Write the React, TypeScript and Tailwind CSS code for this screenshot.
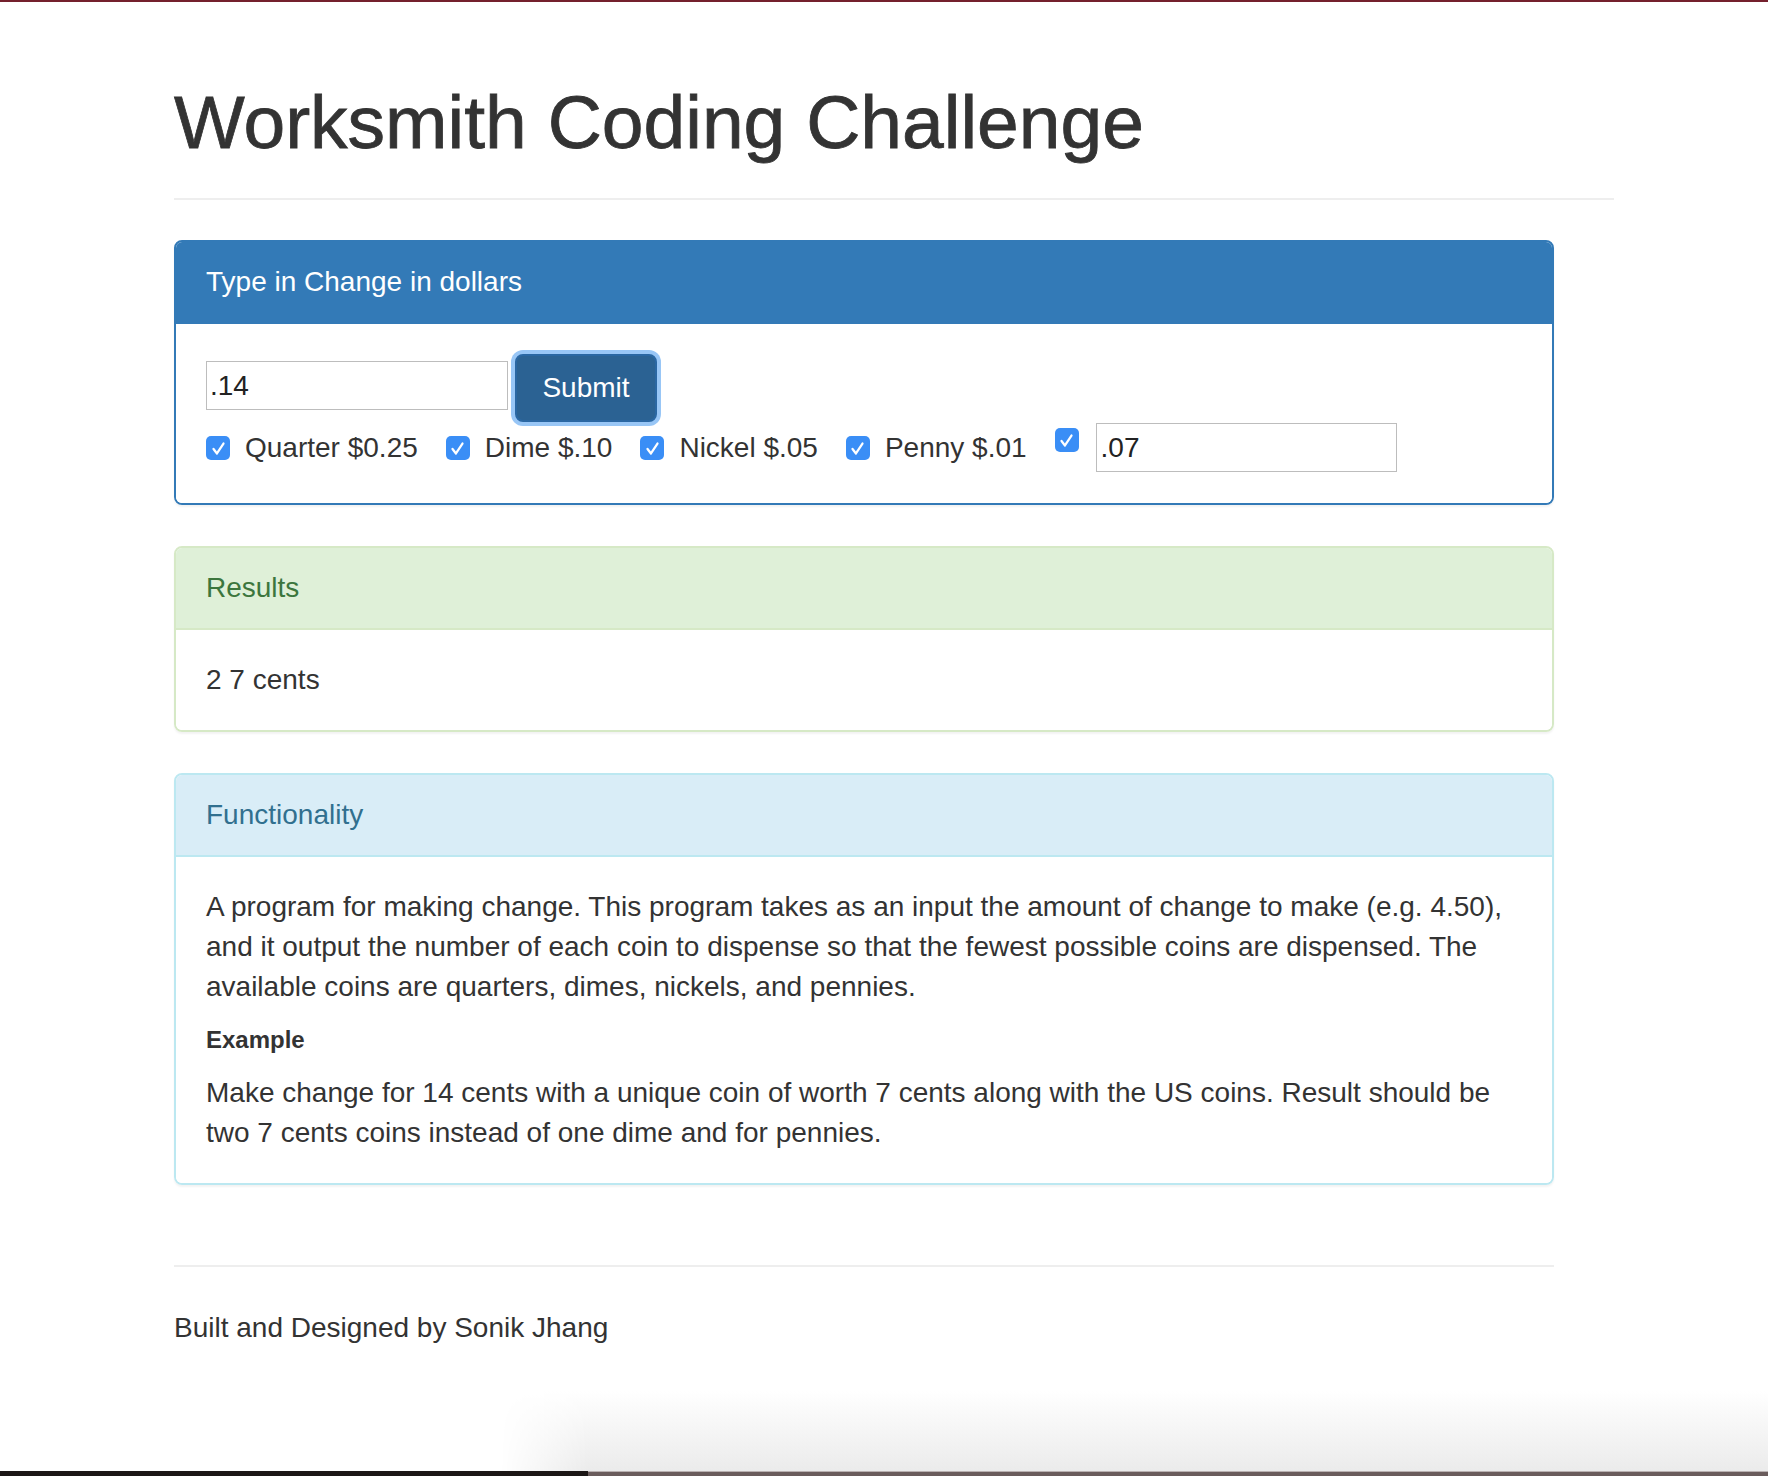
import React from "react";

function Check({ className = "" }: { className?: string }) {
  return (
    <span
      className={
        "flex h-[24px] w-[24px] shrink-0 items-center justify-center rounded-[5px] bg-[#3a8ef6] " +
        className
      }
    >
      <svg width="19" height="19" viewBox="0 0 16 16" fill="none">
        <path
          d="M3.8 8.4 L6.7 12.2 L12.2 3.8"
          stroke="#ffffff"
          strokeWidth="1.9"
          strokeLinecap="round"
          strokeLinejoin="round"
        />
      </svg>
    </span>
  );
}

function Coin({ label }: { label: string }) {
  return (
    <div className="flex items-center gap-[15px]">
      <Check />
      <span className="text-[28px] leading-[40px] text-[#333]">{label}</span>
    </div>
  );
}

export default function App() {
  return (
    <div className="flex min-h-[1476px] flex-col bg-white font-['Liberation_Sans',Arial,sans-serif] text-[#333]">
      <div className="h-[2px] bg-[#74202d]" />

      <div className="pl-[174px]">
        <div className="w-[1440px] border-b-2 border-[#eeeeee] pt-[80px] pb-[35px]">
          <h1 className="text-[75px] leading-[81px] font-normal text-[#333] [-webkit-text-stroke:0.8px_#333]">
            Worksmith Coding Challenge
          </h1>
        </div>

        <div className="w-[1380px] pt-[40px]">
          {/* Input panel */}
          <div className="overflow-hidden rounded-[8px] border-2 border-[#337ab7] shadow-[0_2px_2px_rgba(0,0,0,0.05)]">
            <div className="border-b-2 border-[#337ab7] bg-[#337ab7] px-[30px] py-[20px] text-[28px] leading-[40px] text-white">
              Type in Change in dollars
            </div>
            <div className="bg-white p-[30px]">
              <div className="flex items-start gap-[7px]">
                <div className="mt-[7px] flex h-[49px] w-[302px] items-center border border-[#bdbdbd] px-[3px] text-[28px] text-[#222]">
                  .14
                </div>
                <button className="flex h-[68px] w-[142px] items-center justify-center rounded-[8px] border-2 border-[#2a67a3] bg-[#2b6293] text-[28px] text-white shadow-[0_0_0_4px_#98c6f6]">
                  Submit
                </button>
              </div>
              <div className="mt-[1px] flex h-[50px] items-center gap-[28px]">
                <Coin label="Quarter $0.25" />
                <Coin label="Dime $.10" />
                <Coin label="Nickel $.05" />
                <Coin label="Penny $.01" />
                <div className="flex h-[50px] items-start gap-[17px]">
                  <Check className="mt-[5px]" />
                  <div className="flex h-[49px] w-[301px] items-center border border-[#bdbdbd] px-[4px] text-[28px] text-[#222]">
                    .07
                  </div>
                </div>
              </div>
            </div>
          </div>

          {/* Results panel */}
          <div className="mt-[41px] overflow-hidden rounded-[8px] border-2 border-[#d6e9c6] shadow-[0_2px_2px_rgba(0,0,0,0.05)]">
            <div className="border-b-2 border-[#d6e9c6] bg-[#dff0d8] px-[30px] py-[20px] text-[28px] leading-[40px] text-[#3c763d]">
              Results
            </div>
            <div className="bg-white p-[30px] text-[28px] leading-[40px]">2 7 cents</div>
          </div>

          {/* Functionality panel */}
          <div className="mt-[41px] overflow-hidden rounded-[8px] border-2 border-[#bce8f1] shadow-[0_2px_2px_rgba(0,0,0,0.05)]">
            <div className="border-b-2 border-[#bce8f1] bg-[#d9edf7] px-[30px] py-[20px] text-[28px] leading-[40px] text-[#31708f]">
              Functionality
            </div>
            <div className="bg-white p-[30px] text-[28px] leading-[40px]">
              <p className="mb-[20px]">
                A program for making change. This program takes as an input the amount of change to make (e.g. 4.50), and it output the number of each coin to dispense so that the fewest possible coins are dispensed. The available coins are quarters, dimes, nickels, and pennies.
              </p>
              <h5 className="mb-[20px] text-[24px] leading-[26px] font-bold">Example</h5>
              <p>
                Make change for 14 cents with a unique coin of worth 7 cents along with the US coins. Result should be two 7 cents coins instead of one dime and for pennies.
              </p>
            </div>
          </div>

          {/* Footer */}
          <div className="mt-[80px] border-t-2 border-[#eeeeee] pt-[41px] text-[28px] leading-[40px]">
            Built and Designed by Sonik Jhang
          </div>
        </div>
      </div>

      <div className="flex-1" />

      <div className="ml-[500px] h-[80px] bg-[linear-gradient(to_bottom,#ffffff,#ebebeb)] [mask-image:linear-gradient(to_right,transparent,black_88px)]" />
      <div className="flex h-[5px]">
        <div className="w-[588px] bg-[#1c1716]" />
        <div className="flex-1 border-t border-[#b9b1b1] bg-[#6a5c5c]" />
      </div>
    </div>
  );
}
